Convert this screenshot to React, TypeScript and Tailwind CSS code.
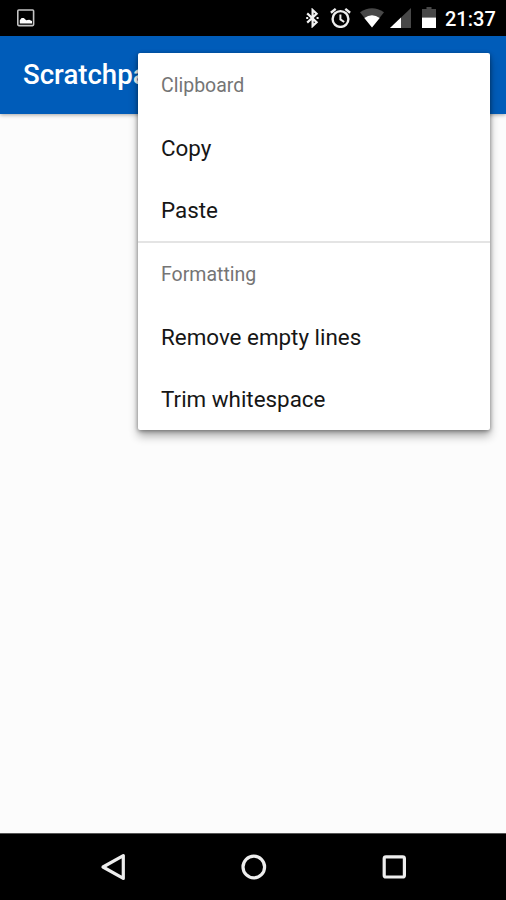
const sections = [
  { title: "Clipboard", items: ["Copy", "Paste"] },
  { title: "Formatting", items: ["Remove empty lines", "Trim whitespace"] },
];

function StatusBar() {
  return (
    <div className="flex h-9 shrink-0 items-center bg-black pl-[17px] pr-[10px] text-white">
      {/* Screenshot notification */}
      <svg className="h-[18px] w-[18px]" viewBox="0 0 18 18" fill="none">
        <rect x="0.8" y="1" width="15.8" height="15.6" rx="1" stroke="#c4c4c4" strokeWidth="1.6" />
        <path d="M2.8 14.4v-3.2L4.6 9h2.2l2.4 2.2 3-.4 2.8 1.2v2.4z" fill="white" />
      </svg>

      <div className="ml-auto flex items-center">
        <svg className="h-5 w-3.5" viewBox="0 0 14 20" fill="none" stroke="#f2f2f2" strokeWidth="2.2">
          <path d="M2.2 5.4l9.4 8.8L7.6 18V2l4 3.8-9.4 8.8" />
          <path d="M1.2 9h2v2h-2zM11.6 9h2v2h-2z" fill="#f2f2f2" stroke="none" />
        </svg>
        <svg className="ml-[11px] h-5 w-[21px]" viewBox="0 0 21 20" fill="none" stroke="#ededed" strokeWidth="2.4">
          <circle cx="10.5" cy="11" r="7.9" />
          <path d="M0.9 4.8l4.8-3.9M20.1 4.8l-4.8-3.9" />
          <path d="M10.4 6.4v5l3.8 2.6" strokeWidth="2" />
        </svg>
        <svg className="ml-[9px] h-5 w-6" viewBox="0 0 24 20">
          <path d="M0 4.3Q12-4 24 4.3L12 19.5z" fill="#484848" />
          <path d="M4.3 9.9Q12 4.6 19.7 9.9L12 19.5z" fill="white" />
        </svg>
        <svg className="ml-1.5 h-5 w-[21px]" viewBox="0 0 21 20">
          <path d="M21 0v20H0z" fill="#484848" />
          <path d="M11 9.5V20H0z" fill="white" />
        </svg>
        <svg className="mb-px ml-[11px] h-[21px] w-3.5" viewBox="0 0 14 21">
          <path d="M4.5 0h5v2H14v8.5H0V2h4.5z" fill="#484848" />
          <path d="M0 10.5h14V21H0z" fill="white" />
        </svg>
        <span className="ml-[9px] w-[51px] whitespace-nowrap pt-0.5 text-[20px] font-medium leading-9">
          21:37
        </span>
      </div>
    </div>
  );
}

function PopupMenu() {
  return (
    <div className="absolute left-[138px] top-[53px] h-[377px] w-[352px] rounded-[2px] bg-white shadow-[0_6px_10px_rgba(0,0,0,0.32),0_1px_4px_rgba(0,0,0,0.4)]">
      {sections.map((section) => (
        <div
          key={section.title}
          className="border-[#e4e4e4] not-first:border-t-2 first:pt-px"
        >
          <div className="flex h-[63px] items-center pl-[23px] text-[19.5px] text-[#757575]">
            {section.title}
          </div>
          {section.items.map((item) => (
            <div
              key={item}
              className="flex h-[62px] items-center pl-[23px] pt-0.5 text-[22.4px] text-[#161616]"
            >
              {item}
            </div>
          ))}
        </div>
      ))}
    </div>
  );
}

function NavigationBar() {
  return (
    <div className="flex h-[67px] shrink-0 items-center border-t border-[#555] bg-black pl-[100px]">
      <svg className="h-7 w-7" viewBox="0 0 28 28" fill="none" stroke="#eee" strokeWidth="3.2">
        <path d="M3 14L23.3 2.6v22.8z" strokeLinejoin="round" />
      </svg>
      <svg className="ml-[112px] h-7 w-7" viewBox="0 0 28 28" fill="none" stroke="#eee" strokeWidth="3.2">
        <circle cx="13.8" cy="14" r="10.8" />
      </svg>
      <svg className="ml-[112px] h-7 w-7" viewBox="0 0 28 28" fill="none" stroke="#eee" strokeWidth="3.2">
        <rect x="4.2" y="3.8" width="20.2" height="20.2" rx="1.8" />
      </svg>
    </div>
  );
}

export default function App() {
  return (
    <div className="relative flex h-[900px] w-[506px] flex-col overflow-hidden bg-[#fcfcfc] font-[Roboto,sans-serif]">
      <StatusBar />
      <header className="flex h-[78px] shrink-0 items-center bg-[#005cb9] pl-[23px] shadow-[0_1px_4px_rgba(0,0,0,0.35)]">
        <h1 className="text-[27.6px] font-medium text-white">Scratchpad</h1>
      </header>
      <main className="flex-1" />
      <NavigationBar />
      <PopupMenu />
    </div>
  );
}
